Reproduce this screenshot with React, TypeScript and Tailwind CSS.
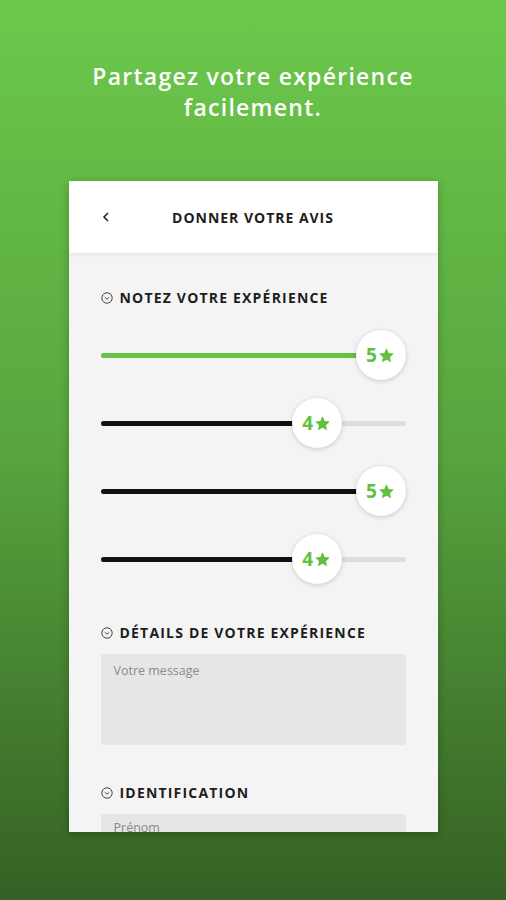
import React from 'react';

const ratings = [
  { value: 5, color: 'green' },
  { value: 4, color: 'black' },
  { value: 5, color: 'black' },
  { value: 4, color: 'black' },
];

function Star() {
  return (
    <svg width="17" height="17" viewBox="0 0 24 24" fill="#62bf3f">
      <path d="M12 1.8l3.1 6.6 7.2.9-5.3 5 1.4 7.1L12 17.9l-6.4 3.5L7 14.3l-5.3-5 7.2-.9z" />
    </svg>
  );
}

function SectionIcon() {
  return (
    <svg width="12" height="12" viewBox="0 0 12 12" fill="none" stroke="#444" strokeWidth="1">
      <circle cx="6" cy="6" r="5.2" />
      <path d="M3.8 5.2L6 7.3l2.2-2.1" />
    </svg>
  );
}

function SectionTitle({ label }: { label: string }) {
  return (
    <div className="flex items-center gap-[7px]">
      <SectionIcon />
      <span className="text-[14px] font-bold tracking-[0.085em] text-[#1d1d1d]">{label}</span>
    </div>
  );
}

function RatingSlider({ value, color }: { value: number; color: string }) {
  // thumb center follows the value on a 1..5 scale
  const pct = (value - 1) / 4;
  const thumbLeft = `calc((100% - 50px) * ${pct})`;
  const fill = color === 'green' ? 'bg-[#66c144]' : 'bg-[#111]';
  return (
    <div className="relative h-[50px]">
      <div className="absolute left-0 right-0 top-[23px] h-[5px] rounded-full bg-[#dddddd]" />
      <div
        className={`absolute left-0 top-[23px] h-[5px] rounded-full ${fill}`}
        style={{ width: `calc(${thumbLeft} + 25px)` }}
      />
      <div
        className="absolute top-0 flex h-[50px] w-[50px] items-center justify-center gap-[1px] rounded-full bg-white shadow-[0_1px_5px_rgba(0,0,0,0.18)]"
        style={{ left: thumbLeft }}
      >
        <span className="text-[19px] font-bold leading-none text-[#62bf3f]">{value}</span>
        <Star />
      </div>
    </div>
  );
}

export default function App() {
  return (
    <div
      className="flex h-[900px] w-[506px] flex-col items-center overflow-hidden bg-gradient-to-b from-[#6cc84b] via-[#58a53e] to-[#356124]"
      style={{ fontFamily: '"Open Sans", "Liberation Sans", sans-serif' }}
    >
      <h1 className="pt-[61px] text-center text-[23px] font-semibold leading-[31px] tracking-[0.055em] text-white">
        Partagez votre expérience
        <br />
        facilement.
      </h1>

      <div className="mt-[58px] flex h-[651px] w-[369px] flex-col overflow-hidden bg-[#f4f4f4] shadow-[0_2px_8px_rgba(0,0,0,0.25)]">
        {/* header */}
        <div className="relative flex h-[72px] shrink-0 items-center justify-center bg-white shadow-[0_2px_4px_rgba(0,0,0,0.06)]">
          <svg className="absolute left-[33px] top-[31px]" width="8" height="10" viewBox="0 0 8 10" fill="none" stroke="#222" strokeWidth="1.6">
            <path d="M6 1L2 5l4 4" />
          </svg>
          <span className="text-[14px] font-bold tracking-[0.07em] text-[#1d1d1d]">DONNER VOTRE AVIS</span>
        </div>

        <div className="flex flex-col px-8 pt-[34px]">
          <SectionTitle label="NOTEZ VOTRE EXPÉRIENCE" />
          <div className="mt-[22px] flex flex-col gap-[18px]">
            {ratings.map((r, i) => (
              <RatingSlider key={i} value={r.value} color={r.color} />
            ))}
          </div>

          <div className="mt-[38px]">
            <SectionTitle label="DÉTAILS DE VOTRE EXPÉRIENCE" />
          </div>
          <div className="mt-[11px] h-[91px] rounded-[3px] bg-[#e6e6e6] px-[13px] pt-[8px] text-[12.5px] text-[#8a8a8a]">
            Votre message
          </div>

          <div className="mt-[37px]">
            <SectionTitle label="IDENTIFICATION" />
          </div>
          <div className="mt-[11px] h-[40px] rounded-[3px] bg-[#e6e6e6] px-[13px] pt-[5px] text-[12.5px] text-[#8a8a8a]">
            Prénom
          </div>
        </div>
      </div>
    </div>
  );
}
